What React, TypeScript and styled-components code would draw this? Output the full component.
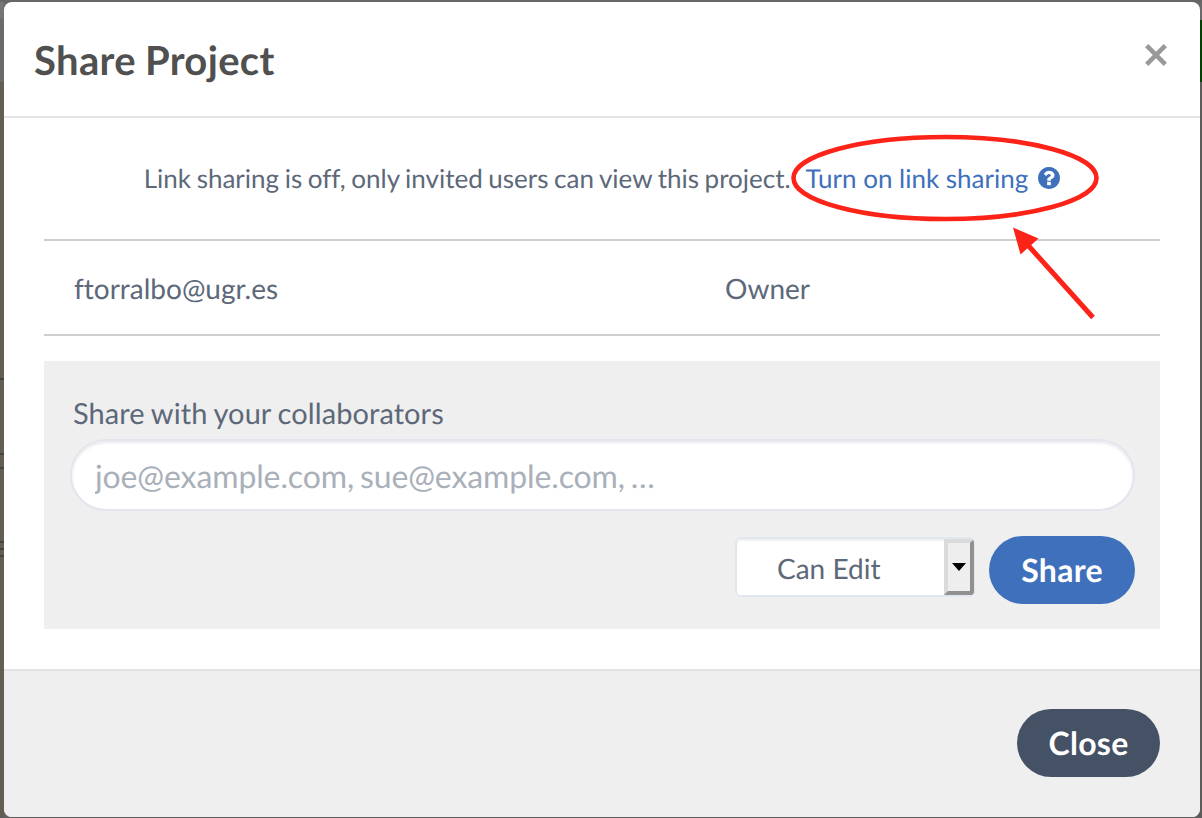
import React from 'react';
import styled, { createGlobalStyle } from 'styled-components';

const GlobalStyle = createGlobalStyle`
  *, *::before, *::after { box-sizing: border-box; }
  body {
    margin: 0;
    overflow: hidden;
    font-family: Lato, sans-serif;
    color: #5d6879;
    text-rendering: geometricPrecision;
    font-variant-ligatures: none;
  }
  input, button { text-rendering: inherit; }
`;

const Backdrop = styled.div`
  width: 1202px;
  height: 818px;
  padding: 2px 2px 1px 4px;
  background:
    linear-gradient(#676664, #676664) 0 0 / 100% 2px no-repeat,
    linear-gradient(#5d5d5d, #5d5d5d) 0 100% / 100% 1px no-repeat,
    linear-gradient(#696969 20px, #043f04 20px, #043f04 82px, #5d5c5b 82px) 100% 0 / 4px 100% no-repeat,
    linear-gradient(#454540, #454540) 0 378px / 4px 2px no-repeat,
    linear-gradient(#454540, #454540) 0 453px / 4px 2px no-repeat,
    linear-gradient(#454540, #454540) 0 467px / 4px 2px no-repeat,
    linear-gradient(#454540, #454540) 0 541px / 4px 2px no-repeat,
    linear-gradient(#454540, #454540) 0 548px / 4px 2px no-repeat,
    linear-gradient(#454540, #454540) 0 555px / 4px 2px no-repeat,
    linear-gradient(#757575 18px, #6b6b6b 20px, #6b6b6b 82px, #625e51 82px) 0 0 / 4px 100% no-repeat,
    #666;
`;

const Modal = styled.div`
  position: relative;
  display: flex;
  flex-direction: column;
  height: 815px;
  background: #fff;
  border-radius: 8px;
  overflow: hidden;
`;

const Header = styled.header`
  display: flex;
  justify-content: space-between;
  height: 116px;
  padding: 34px 32px 0 30px;
  border-bottom: 2px solid #e5e5e5;
`;

const Title = styled.h3`
  margin: 0;
  font-size: 40px;
  line-height: 48px;
  font-weight: 700;
  letter-spacing: 0.33px;
  word-spacing: -1px;
  color: #505050;
`;

const Dismiss = styled.button`
  width: 24px;
  height: 24px;
  margin-top: 7px;
  padding: 0;
  border: 0;
  background: none;
  color: #999;
  svg { display: block; }
`;

const Body = styled.main`
  flex: 1;
  padding: 0 40px;
`;

const SharingStatus = styled.div`
  display: flex;
  justify-content: center;
  align-items: flex-start;
  height: 123px;
  padding-top: 44px;
  border-bottom: 2px solid #cfcfcf;
  font-size: 26px;
  line-height: 32px;
  white-space: pre;
`;

const StatusText = styled.span`
  margin-right: 3.5px;
  word-spacing: -1.05px;
`;

const LinkAction = styled.a`
  display: flex;
  align-items: center;
  color: #3e70bb;
  svg { margin-left: 10px; }
`;

const MemberRow = styled.div`
  display: grid;
  grid-template-columns: 651px 1fr;
  height: 95px;
  padding: 30px 30px 0;
  border-bottom: 2px solid #cfcfcf;
  font-size: 28px;
  line-height: 34px;
`;

const InviteForm = styled.form`
  height: 268px;
  margin-top: 25px;
  padding: 36px 25px 0 26px;
  background: #efefef;
`;

const FieldLabel = styled.label`
  display: block;
  height: 42px;
  padding-left: 3px;
  font-size: 29px;
  line-height: 34px;
  letter-spacing: 0.08px;
  word-spacing: -0.8px;
`;

const EmailInput = styled.input`
  display: block;
  width: 1065px;
  height: 72px;
  padding: 1px 23px 1px;
  border: 2px solid #e2e5ee;
  border-radius: 36px;
  background: #fff;
  box-shadow: inset 0 2px 3px rgba(0, 0, 0, 0.09);
  font: 400 32px/40px Lato, sans-serif;
  letter-spacing: -0.12px;
  word-spacing: -2.2px;
  outline: 0;
  &::placeholder { color: #a9b0ba; opacity: 1; }
`;

const FormActions = styled.div`
  display: flex;
  justify-content: flex-end;
  gap: 14px;
  margin-top: 25px;
`;

const PrivilegeSelect = styled.div`
  display: flex;
  width: 240px;
  height: 60px;
  margin-top: 1px;
  border: 2px solid #e2e7ee;
  border-radius: 6px;
  background: #fff;
  box-shadow: inset 0 2px 2px rgba(0, 0, 0, 0.06);
`;

const SelectValue = styled.span`
  flex: 1;
  padding: 12px 0 0 40px;
  font-size: 28px;
  line-height: 34px;
`;

const SelectArrow = styled.span`
  display: flex;
  align-items: center;
  justify-content: center;
  width: 30px;
  margin-right: -1px;
  border: 4px solid;
  border-color: #dadada #909090 #909090 #dadada;
  border-radius: 0 4px 4px 0;
  background: #eee;
`;

const PillButton = styled.button<{ $tone: string; $width: number }>`
  width: ${(p) => p.$width}px;
  height: 68px;
  padding: 0;
  border: 0;
  border-radius: 34px;
  background: ${(p) => p.$tone};
  color: #fff;
  font: 700 32px/40px Lato, sans-serif;
  letter-spacing: 0.3px;
`;

const Footer = styled.footer`
  display: flex;
  justify-content: flex-end;
  height: 148px;
  padding: 38px 40px 0;
  border-top: 2px solid #e3e3e3;
  background: #efefef;
`;

const Annotation = styled.svg`
  position: absolute;
  left: 780px;
  top: 128px;
  pointer-events: none;
`;

const HelpIcon = () => (
  <svg width="22" height="22" viewBox="0 128 1536 1536" fill="currentColor">
    <path d="M896 1376v-192q0-14-9-23t-23-9h-192q-14 0-23 9t-9 23v192q0 14 9 23t23 9h192q14 0 23-9t9-23zm256-672q0-88-55.5-163t-138.5-116-170-41q-243 0-371 213-15 24 8 42l132 100q7 6 19 6 16 0 25-12 53-68 86-92 34-24 86-24 48 0 85.500 26t37.500 59q0 38-20 61t-68 45q-63 28-115.500 86.500t-52.500 125.500v36q0 14 9 23t23 9h192q14 0 23-9t9-23q0-19 21.500-49.500t54.500-49.500q32-18 49-28.500t46-35 44.500-48 28-60.500 12.500-81zm384 192q0 209-103 385.500t-279.500 279.500-385.500 103-385.500-103-279.500-279.500-103-385.500 103-385.500 279.500-279.500 385.500-103 385.500 103 279.500 279.500 103 385.500z" />
  </svg>
);

export default function App() {
  return (
    <>
      <GlobalStyle />
      <Backdrop>
        <Modal role="dialog">
          <Header>
            <Title>Share Project</Title>
            <Dismiss aria-label="Dismiss">
              <svg width="24" height="24" viewBox="0 0 24 24" stroke="currentColor" strokeWidth="4.6">
                <path d="M2.700 2.700 21.300 21.300M21.300 2.700 2.700 21.300" />
              </svg>
            </Dismiss>
          </Header>
          <Body>
            <SharingStatus>
              <StatusText>Link sharing is off, only invited users can view this project.{'  '}</StatusText>
              <LinkAction>Turn on link sharing<HelpIcon /></LinkAction>
            </SharingStatus>
            <MemberRow>
              <span>ftorralbo@ugr.es</span>
              <span>Owner</span>
            </MemberRow>
            <InviteForm>
              <FieldLabel>Share with your collaborators</FieldLabel>
              <EmailInput placeholder="joe@example.com, sue@example.com, …" />
              <FormActions>
                <PrivilegeSelect>
                  <SelectValue>Can Edit</SelectValue>
                  <SelectArrow>
                    <svg width="14" height="8" viewBox="0 0 14 8">
                      <path d="M0 0h14L7 8z" />
                    </svg>
                  </SelectArrow>
                </PrivilegeSelect>
                <PillButton type="button" $tone="#3e70bb" $width={146}>Share</PillButton>
              </FormActions>
            </InviteForm>
          </Body>
          <Footer>
            <PillButton $tone="#455164" $width={143}>Close</PillButton>
          </Footer>
          <Annotation width="330" height="200" viewBox="784 130 330 200" fill="none" stroke="#fc2418">
            <ellipse cx="945" cy="178" rx="151.500" ry="41" strokeWidth="4.600" />
            <path d="M1093 317.500 1026 243" strokeWidth="5" />
            <path d="M1013 227.500 1038.500 238.500 1020.500 254.500z" fill="#fc2418" stroke="none" />
          </Annotation>
        </Modal>
      </Backdrop>
    </>
  );
}
